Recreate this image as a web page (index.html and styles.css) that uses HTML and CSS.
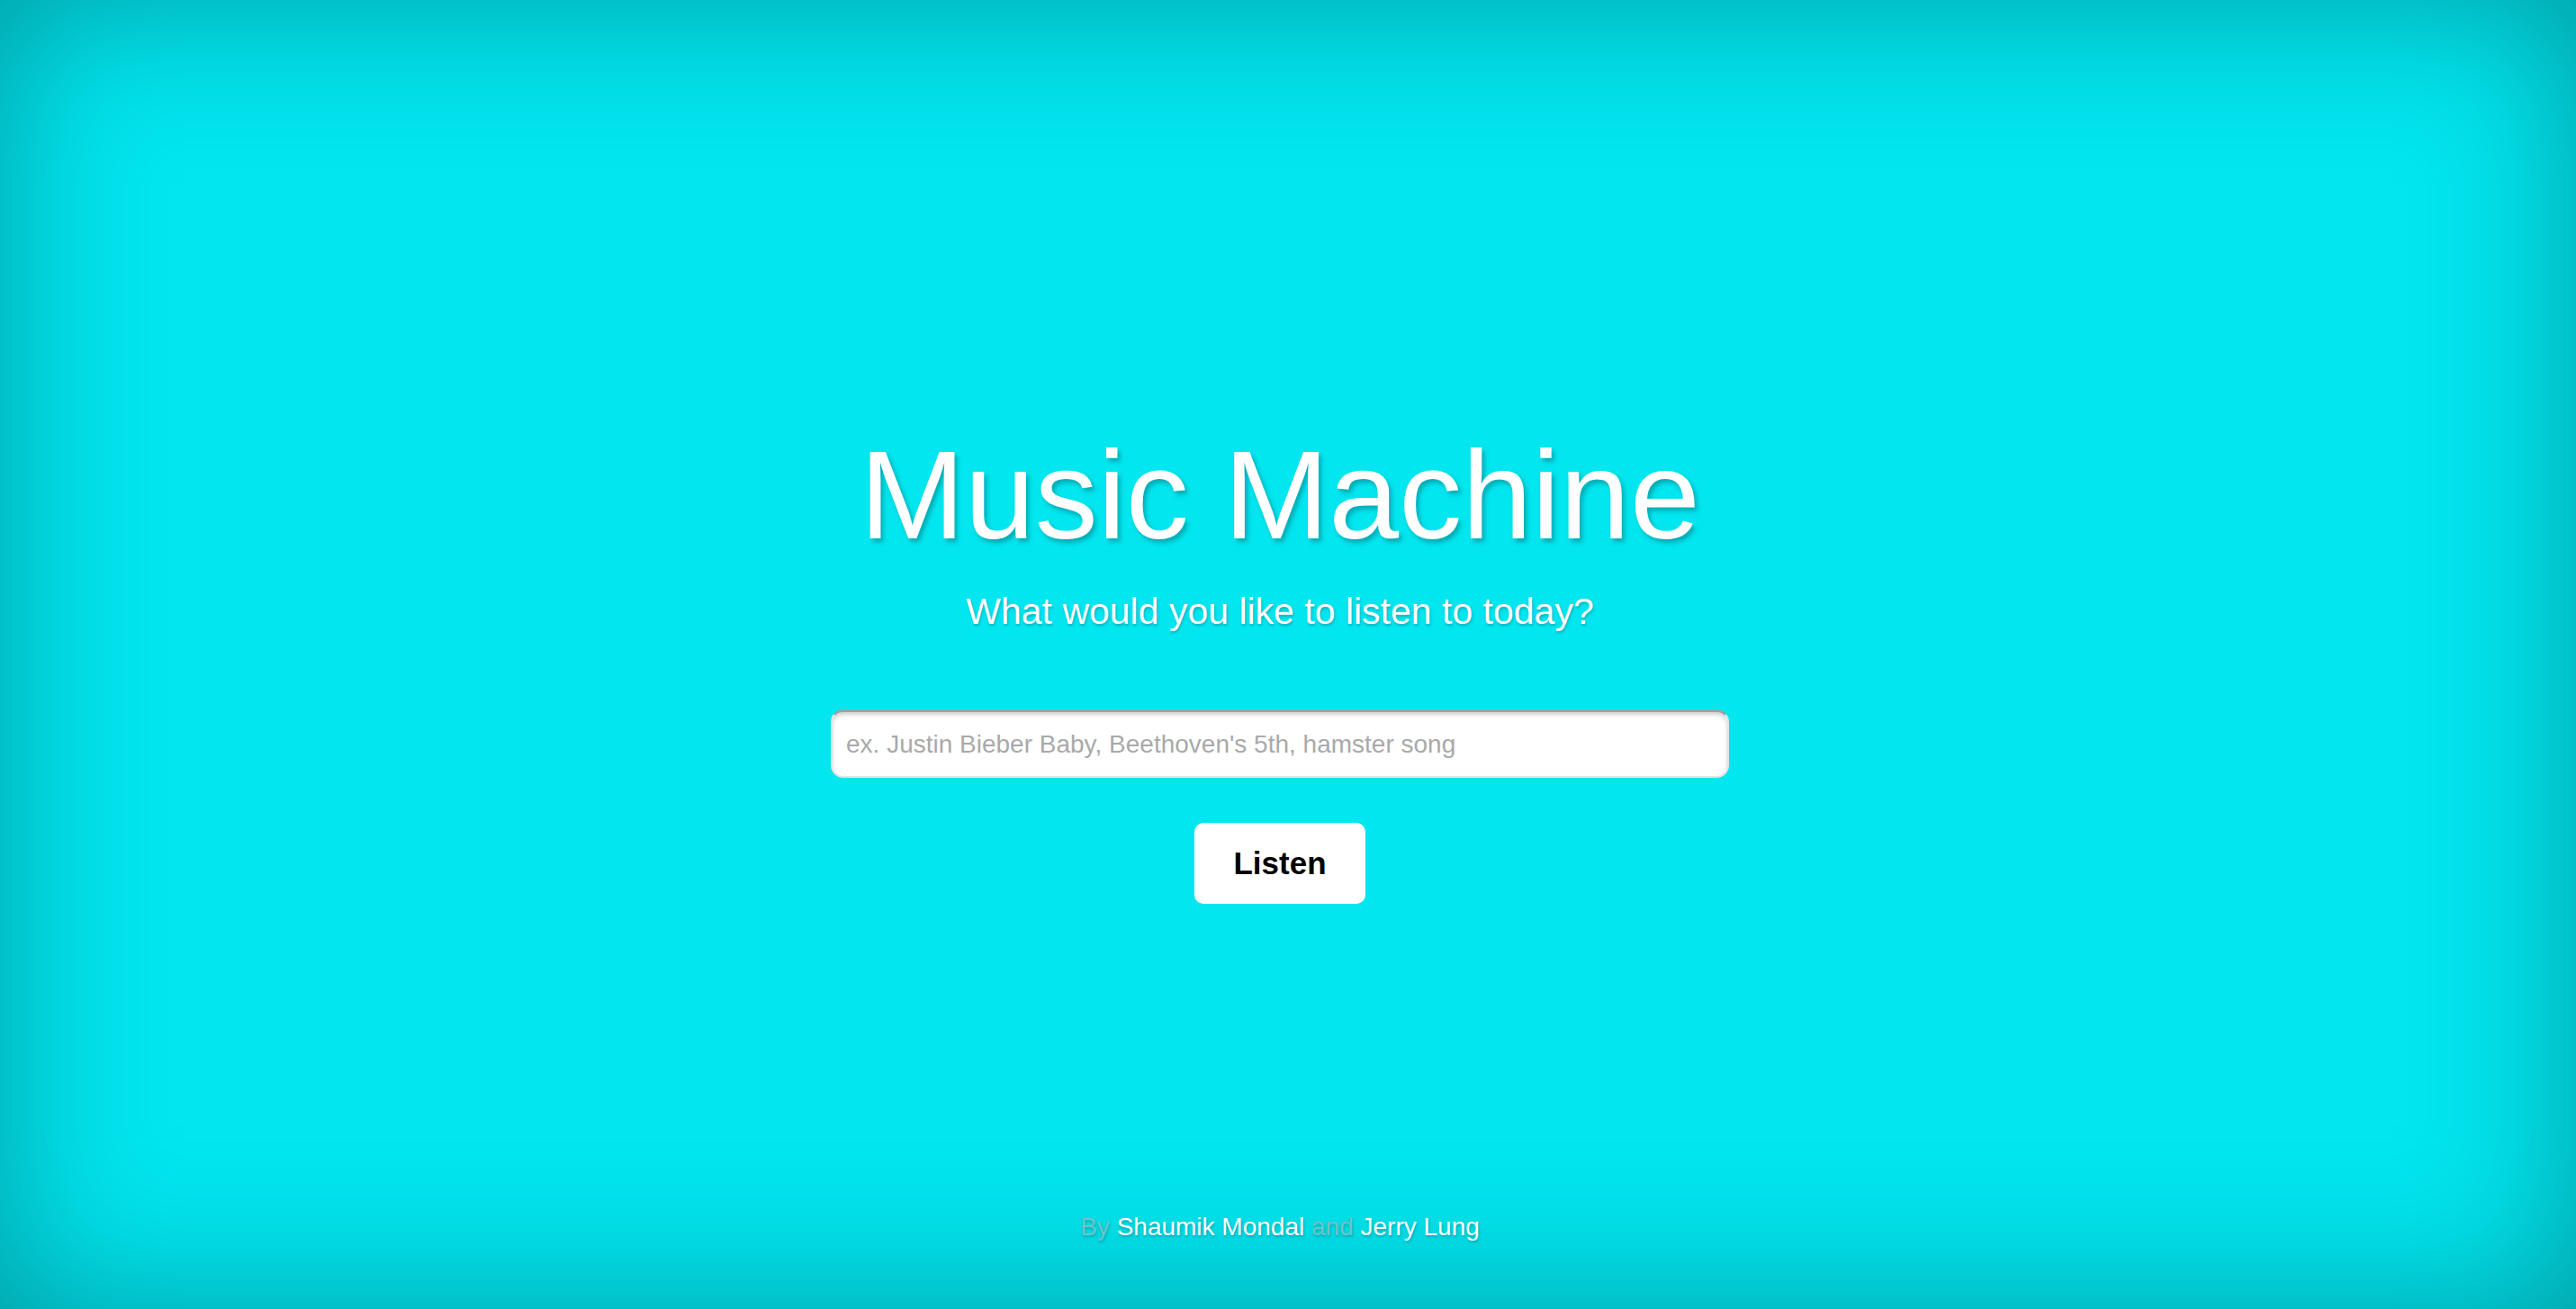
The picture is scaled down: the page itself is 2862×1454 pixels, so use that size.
FILE: index.html
```html
<!DOCTYPE html>
<html>
<head>
<meta charset="utf-8">
<title>Music Machine</title>
<link rel="stylesheet" href="styles.css">
</head>
<body>
<div class="page">
  <main class="hero">
    <h1 class="title">Music Machine</h1>
    <p class="subtitle">What would you like to listen to today?</p>
    <input class="search" type="text" placeholder="ex. Justin Bieber Baby, Beethoven's 5th, hamster song">
    <button class="listen" type="button">Listen</button>
  </main>
  <footer class="credits">By <span class="name">Shaumik Mondal</span> and <span class="name">Jerry Lung</span></footer>
</div>
</body>
</html>
```

FILE: styles.css
```css
html, body {
  margin: 0;
  padding: 0;
  height: 100%;
}
body {
  background: #02e6ef;
  font-family: "Liberation Sans", Arial, Helvetica, sans-serif;
  color: #fff;
}
.page {
  min-height: 100vh;
  box-sizing: border-box;
  display: flex;
  flex-direction: column;
  align-items: center;
  padding-right: 18px;
  box-shadow: inset 0 0 170px rgba(0, 40, 45, 0.4);
}
.hero {
  display: flex;
  flex-direction: column;
  align-items: center;
  padding-top: 480px;
}
.title {
  margin: 0;
  font-size: 140px;
  line-height: 140px;
  font-weight: normal;
  text-shadow: 3px 4px 5px rgba(0, 60, 70, 0.35);
}
.subtitle {
  margin: 39px 0 0;
  font-size: 41px;
  line-height: 40px;
  text-shadow: 1px 2px 3px rgba(0, 60, 70, 0.3);
}
.search {
  margin-top: 89px;
  width: 998px;
  height: 76px;
  box-sizing: border-box;
  border: 2px solid #e4e4e4;
  border-top: 3px solid #a0a0a0;
  border-radius: 14px;
  background: #fff;
  box-shadow: inset 0 3px 4px rgba(0, 0, 0, 0.18);
  padding: 0 15px;
  font-family: "Liberation Sans", Arial, sans-serif;
  font-size: 28px;
  color: #333;
  outline: none;
}
.search::placeholder {
  color: #a9a9a9;
}
.listen {
  margin-top: 50px;
  width: 190px;
  height: 90px;
  border: none;
  border-radius: 10px;
  background: #fff;
  font-family: "Liberation Sans", Arial, sans-serif;
  font-weight: bold;
  font-size: 35px;
  color: #000;
  padding: 0;
}
.credits {
  margin-top: auto;
  padding-bottom: 77px;
  font-size: 28px;
  line-height: 28px;
  color: #6cc4c9;
  text-shadow: 1px 2px 3px rgba(0, 60, 70, 0.3);
}
.name {
  color: #fff;
}
```
